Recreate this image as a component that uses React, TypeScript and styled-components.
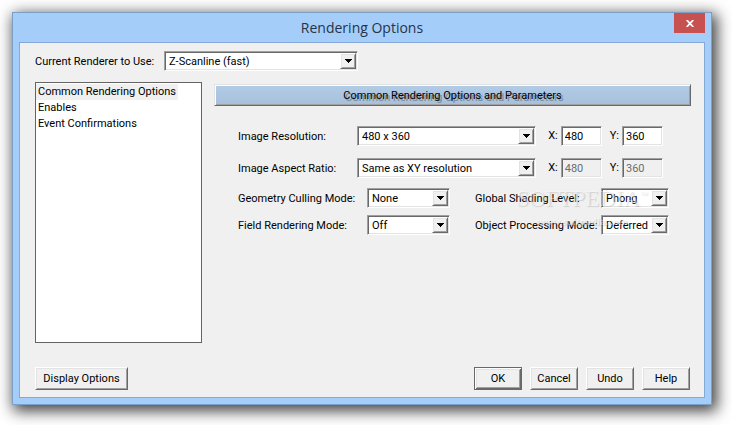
import React, { useState } from "react";
import styled, { createGlobalStyle, css } from "styled-components";

const GlobalStyle = createGlobalStyle`
  * { box-sizing: border-box; }
  body {
    margin: 0;
    background: #fff;
    font: 11px/16px Roboto, "Liberation Sans", Arial, sans-serif;
    color: #000;
  }
  button, input, select { font: inherit; color: inherit; margin: 0; border-radius: 0; }
`;

const sunken = css`
  border: 1px solid;
  border-color: #a0a0a0 #fff #fff #a0a0a0;
  box-shadow: inset 1px 1px 0 #696969, inset -1px -1px 0 #e3e3e3;
`;

const raised = css`
  border: 1px solid;
  border-color: #fff #696969 #696969 #fff;
  box-shadow: inset 1px 1px 0 #e3e3e3, inset -1px -1px 0 #a0a0a0;
`;

const Desktop = styled.main`
  padding: 12px 20px 20px 12px;
`;

const Window = styled.section`
  padding: 0 6px 6px;
  border: 1px solid #7c9fc8;
  background: #a4cdf9;
  box-shadow: 3px 4px 14px 2px rgba(0, 0, 0, 0.75);
`;

const TitleBar = styled.header`
  position: relative;
  height: 29px;
`;

const Title = styled.h1`
  margin: 0;
  padding-top: 1px;
  text-align: center;
  font: 400 14px/28px "Open Sans", "Noto Sans", sans-serif;
  color: #26344a;
`;

const CloseButton = styled.button`
  position: absolute;
  top: 0;
  right: 0;
  display: flex;
  align-items: center;
  justify-content: center;
  width: 31px;
  height: 20px;
  padding: 0;
  border: 0;
  background: #c75050;
`;

const Client = styled.div`
  padding: 8px 13px 7px 15px;
  border: 1px solid #84a9d8;
  background: #f0f0f0;
`;

const RendererRow = styled.div`
  display: flex;
  align-items: center;
`;

const Label = styled.label<{ $width: number }>`
  flex: none;
  width: ${(p) => p.$width}px;
  padding-top: 2px;
  white-space: nowrap;
`;

const SelectBox = styled.div<{ $width?: number }>`
  position: relative;
  height: 20px;
  ${(p) => (p.$width ? `flex: none; width: ${p.$width}px;` : "flex: 1; min-width: 0;")}
`;

const NativeSelect = styled.select`
  display: block;
  appearance: none;
  width: 100%;
  height: 20px;
  padding: 2px 18px 0 4px;
  background: #fff;
  outline: 0;
  ${sunken}
`;

const ArrowButton = styled.span`
  position: absolute;
  top: 2px;
  right: 2px;
  display: flex;
  align-items: center;
  justify-content: center;
  width: 16px;
  height: 16px;
  background: #f0f0f0;
  pointer-events: none;
  ${raised}
`;

const Main = styled.div`
  display: flex;
  gap: 12px;
  margin-top: 11px;
`;

const OptionList = styled.ul`
  flex: none;
  width: 167px;
  height: 261px;
  margin: 0;
  padding: 1px 0;
  list-style: none;
  border: 1px solid #646464;
  background: #fff;
`;

const OptionItem = styled.li`
  display: flex;
`;

const OptionButton = styled.button<{ $selected: boolean }>`
  height: 16px;
  padding: 0 2px;
  border: 0;
  line-height: 16px;
  background: ${(p) => (p.$selected ? "#f0f0f0" : "transparent")};
`;

const Panel = styled.div`
  flex: 1;
  min-width: 0;
  padding-top: 2px;
`;

const Banner = styled.h2`
  margin: 0;
  height: 22px;
  text-align: center;
  font-size: 11px;
  font-weight: 400;
  line-height: 22px;
  background: linear-gradient(#b3cce6, #a6bfdb);
  text-shadow: 2px 2px 0 #7c8896;
  border: 1px solid;
  border-color: #e3e3e3 #696969 #696969 #e3e3e3;
  box-shadow: inset 1px 1px 0 #fff, inset -1px -1px 0 #a0a0a0;
`;

const Settings = styled.div`
  position: relative;
  padding: 20px 22px 0 24px;
`;

const SizeRow = styled.div`
  display: flex;
  align-items: center;
  margin-bottom: 12px;
  padding-right: 6px;
`;

const AxisFields = styled.div`
  display: flex;
  gap: 8px;
  margin-left: 12px;
`;

const Axis = styled.label`
  display: flex;
  align-items: center;
  gap: 3px;
`;

const NumberInput = styled.input`
  width: 41px;
  height: 20px;
  padding: 0 3px;
  background: #fff;
  outline: 0;
  ${sunken}
  &:disabled { background: #f0f0f0; color: #6d6d6d; }
`;

const ModeGrid = styled.div`
  display: grid;
  grid-template-columns: auto auto;
  justify-content: space-between;
  row-gap: 7px;
  margin-top: -2px;
`;

const ModeField = styled.div`
  display: flex;
  align-items: center;
`;

const Watermark = styled.div`
  position: absolute;
  top: 82px;
  right: 43px;
  text-align: center;
  font-family: "Liberation Serif", serif;
  color: rgba(255, 255, 255, 0.45);
  text-shadow: 1px 1px 1px rgba(0, 0, 0, 0.14);
  pointer-events: none;
`;

const WatermarkName = styled.div`
  font-size: 23px;
  line-height: 22px;
`;

const WatermarkMark = styled.sup`
  font-size: 8px;
  line-height: 0;
`;

const WatermarkSite = styled.div`
  margin-top: 4px;
  font-size: 11px;
  font-weight: 700;
  line-height: 14px;
`;

const Footer = styled.footer`
  display: flex;
  justify-content: space-between;
  margin-top: 24px;
  padding-right: 1px;
`;

const Actions = styled.div`
  display: flex;
  gap: 8px;
`;

const PushButton = styled.button<{ $width: number; $default?: boolean }>`
  width: ${(p) => p.$width}px;
  height: 23px;
  padding: 0;
  background: #f0f0f0;
  ${raised}
  ${(p) =>
    p.$default &&
    css`
      border-color: #696969;
      box-shadow: inset 1px 1px 0 #fff, inset -1px -1px 0 #696969,
        inset 2px 2px 0 #e3e3e3, inset -2px -2px 0 #a0a0a0;
    `}
`;

type DropdownProps = { id: string; options: string[]; width?: number };

function Dropdown({ id, options, width }: DropdownProps) {
  return (
    <SelectBox $width={width}>
      <NativeSelect id={id} defaultValue={options[0]}>
        {options.map((o) => (
          <option key={o}>{o}</option>
        ))}
      </NativeSelect>
      <ArrowButton>
        <svg width="7" height="4" viewBox="0 0 7 4" shapeRendering="crispEdges" aria-hidden="true">
          <path d="M0 0h7v1H6v1H5v1H4v1H3V3H2V2H1V1H0z" />
        </svg>
      </ArrowButton>
    </SelectBox>
  );
}

function AxisPair({ disabled = false }: { disabled?: boolean }) {
  return (
    <AxisFields>
      <Axis>
        X: <NumberInput defaultValue="480" disabled={disabled} />
      </Axis>
      <Axis>
        Y: <NumberInput defaultValue="360" disabled={disabled} />
      </Axis>
    </AxisFields>
  );
}

const categories = ["Common Rendering Options", "Enables", "Event Confirmations"];

export default function App() {
  const [selected, setSelected] = useState(categories[0]);
  return (
    <Desktop>
      <GlobalStyle />
      <Window>
        <TitleBar>
          <Title>Rendering Options</Title>
          <CloseButton aria-label="Close">
            <svg width="8" height="7" viewBox="0 0 8 7" fill="none" stroke="#fff" strokeWidth="1.8" aria-hidden="true">
              <path d="M.7 0l6.6 7M7.3 0L.7 7" />
            </svg>
          </CloseButton>
        </TitleBar>
        <Client>
          <RendererRow>
            <Label $width={129} htmlFor="renderer">Current Renderer to Use:</Label>
            <Dropdown id="renderer" width={194} options={["Z-Scanline (fast)"]} />
          </RendererRow>
          <Main>
            <OptionList>
              {categories.map((c) => (
                <OptionItem key={c}>
                  <OptionButton $selected={c === selected} onClick={() => setSelected(c)}>
                    {c}
                  </OptionButton>
                </OptionItem>
              ))}
            </OptionList>
            <Panel>
              <Banner>Common Rendering Options and Parameters</Banner>
              <Settings>
                <SizeRow>
                  <Label $width={119} htmlFor="resolution">Image Resolution:</Label>
                  <Dropdown id="resolution" options={["480 x 360"]} />
                  <AxisPair />
                </SizeRow>
                <SizeRow>
                  <Label $width={119} htmlFor="aspect">Image Aspect Ratio:</Label>
                  <Dropdown id="aspect" options={["Same as XY resolution"]} />
                  <AxisPair disabled />
                </SizeRow>
                <ModeGrid>
                  <ModeField>
                    <Label $width={129} htmlFor="culling">Geometry Culling Mode:</Label>
                    <Dropdown id="culling" width={83} options={["None"]} />
                  </ModeField>
                  <ModeField>
                    <Label $width={126} htmlFor="shading">Global Shading Level:</Label>
                    <Dropdown id="shading" width={68} options={["Phong"]} />
                  </ModeField>
                  <ModeField>
                    <Label $width={129} htmlFor="field">Field Rendering Mode:</Label>
                    <Dropdown id="field" width={83} options={["Off"]} />
                  </ModeField>
                  <ModeField>
                    <Label $width={126} htmlFor="processing">Object Processing Mode:</Label>
                    <Dropdown id="processing" width={68} options={["Deferred"]} />
                  </ModeField>
                </ModeGrid>
                <Watermark aria-hidden="true">
                  <WatermarkName>
                    SOFTPEDIA<WatermarkMark>™</WatermarkMark>
                  </WatermarkName>
                  <WatermarkSite>www.softpedia.com</WatermarkSite>
                </Watermark>
              </Settings>
            </Panel>
          </Main>
          <Footer>
            <PushButton $width={93}>Display Options</PushButton>
            <Actions>
              <PushButton $width={48} $default>OK</PushButton>
              <PushButton $width={48}>Cancel</PushButton>
              <PushButton $width={48}>Undo</PushButton>
              <PushButton $width={48}>Help</PushButton>
            </Actions>
          </Footer>
        </Client>
      </Window>
    </Desktop>
  );
}
